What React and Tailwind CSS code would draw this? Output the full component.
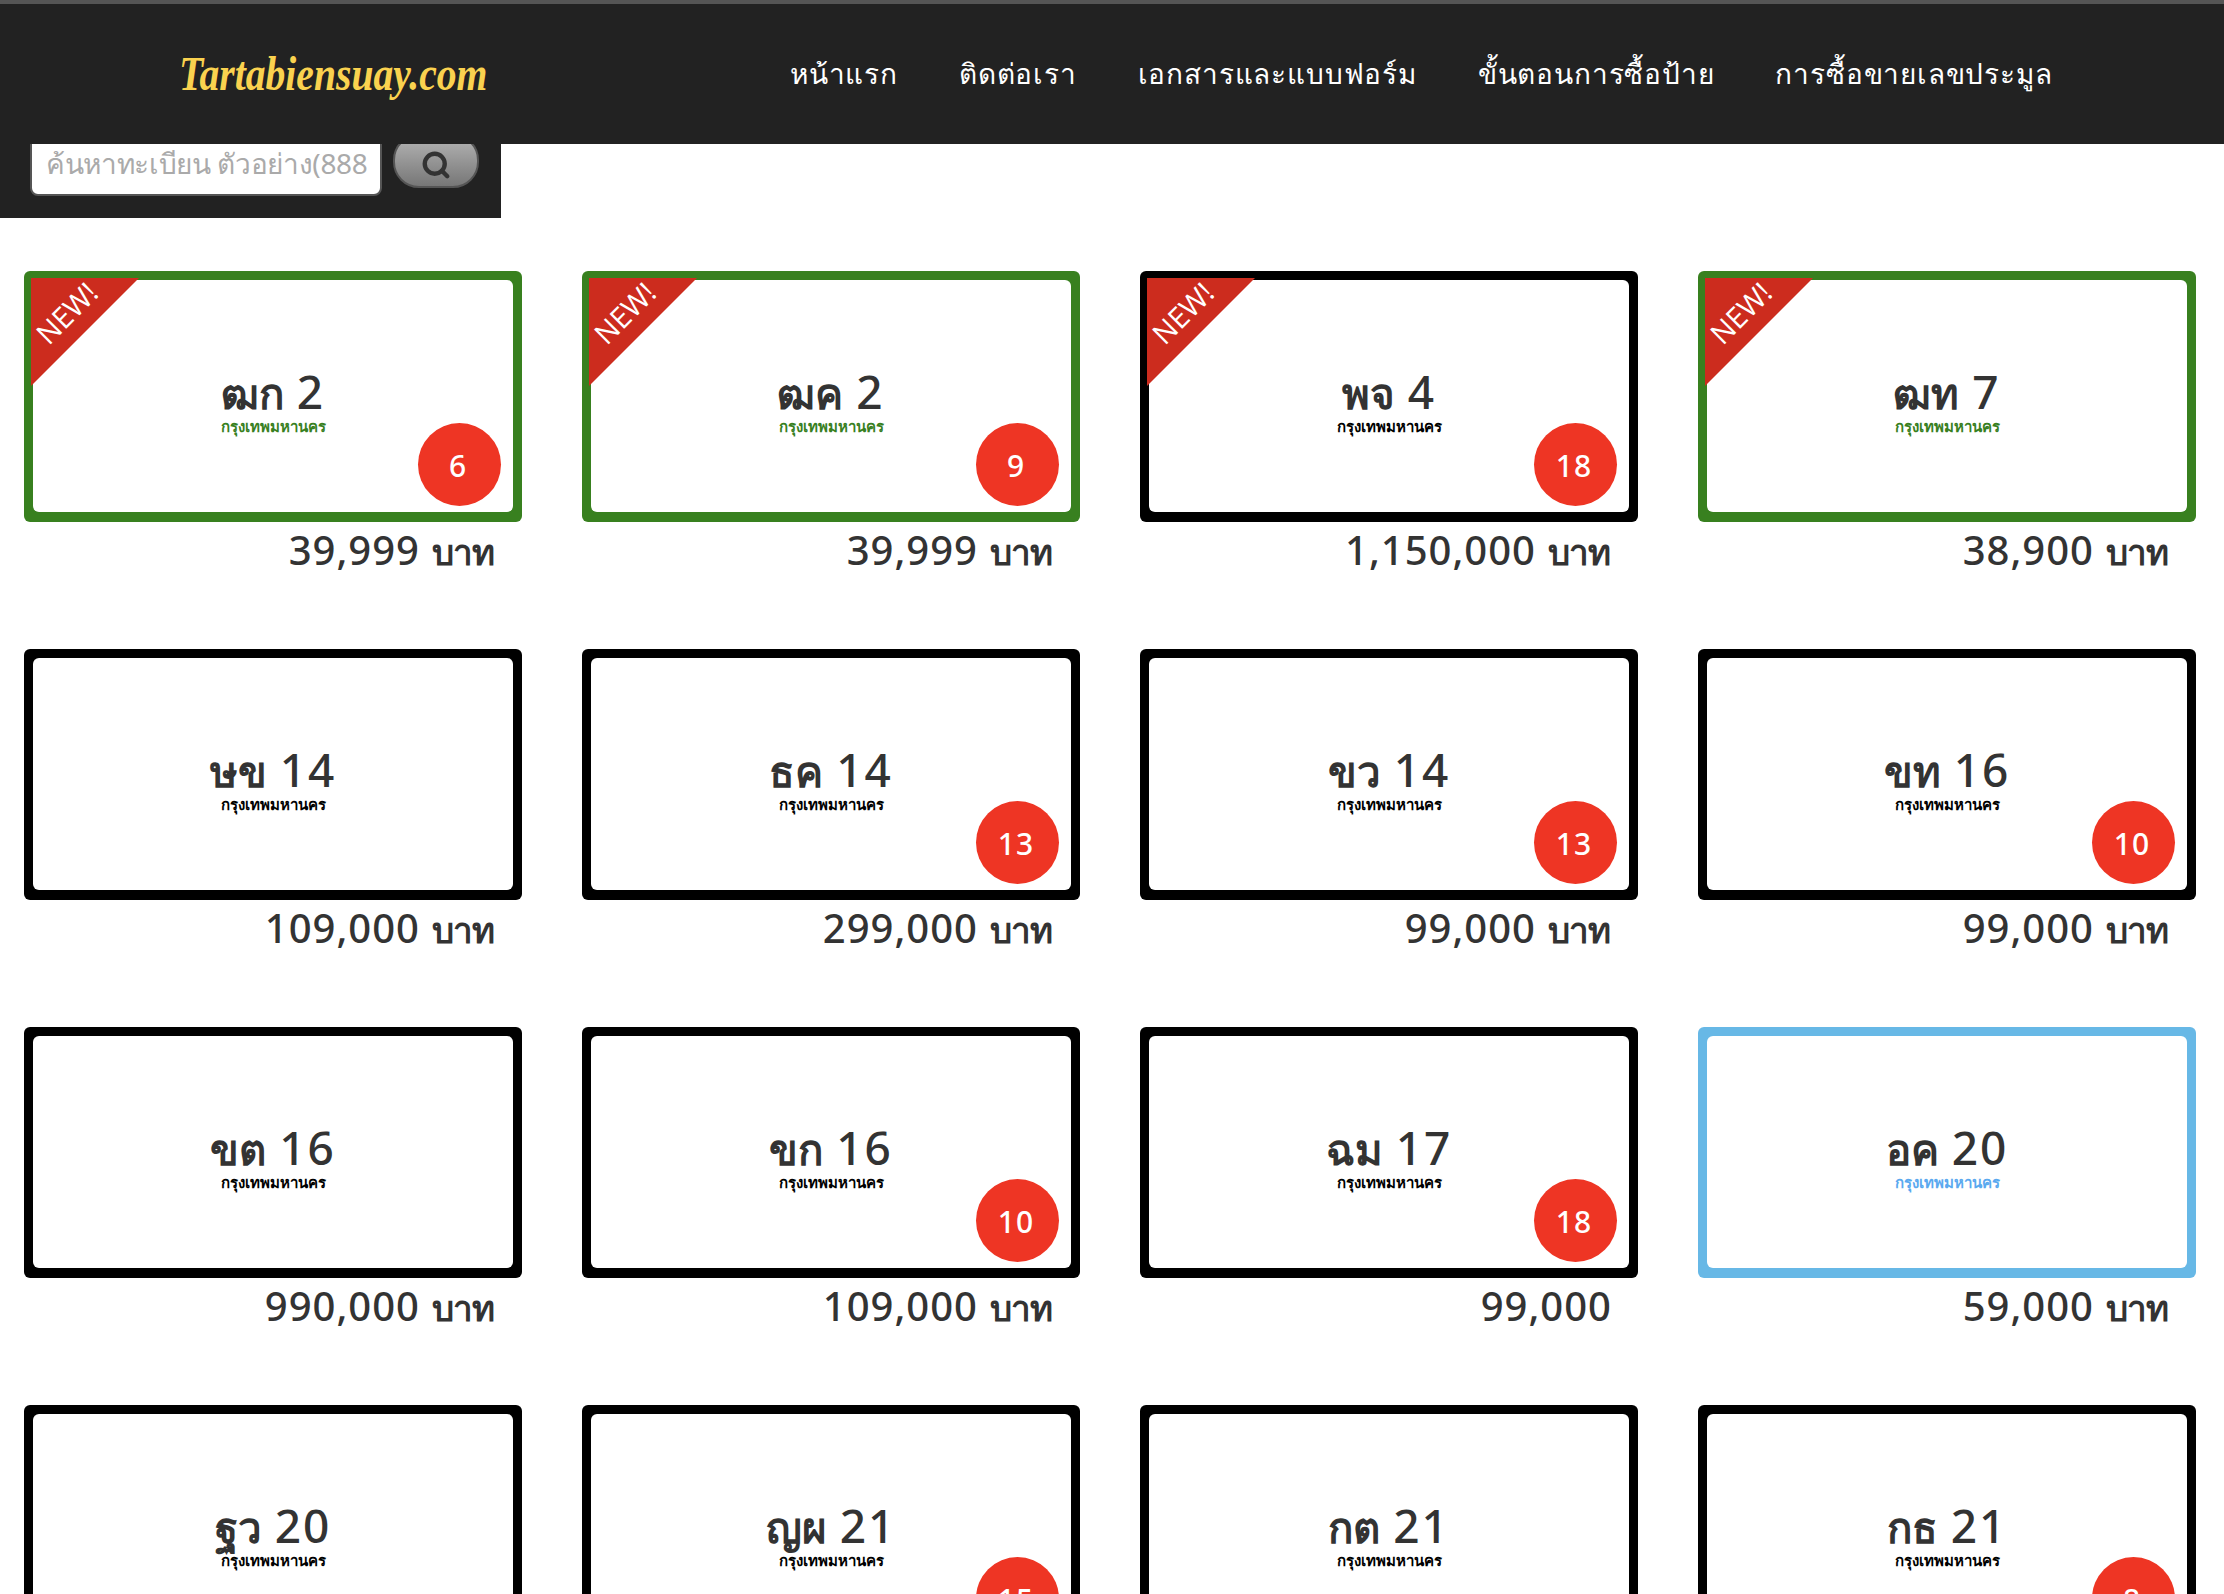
import React from "react";
import { Search } from "lucide-react";

const green = { b: "bg-[#38801f]", t: "text-[#38801f]" };
const black = { b: "bg-black", t: "text-black" };
const blue = { b: "bg-[#67b8e6]", t: "text-[#5aa9ef]" };

const plates = [
  { p: "ฒก", d: "2", c: green, n: 6, price: "39,999", isNew: true },
  { p: "ฒค", d: "2", c: green, n: 9, price: "39,999", isNew: true },
  { p: "พจ", d: "4", c: black, n: 18, price: "1,150,000", isNew: true },
  { p: "ฒท", d: "7", c: green, price: "38,900", isNew: true },
  { p: "ษข", d: "14", c: black, price: "109,000" },
  { p: "ธค", d: "14", c: black, n: 13, price: "299,000" },
  { p: "ขว", d: "14", c: black, n: 13, price: "99,000" },
  { p: "ขท", d: "16", c: black, n: 10, price: "99,000" },
  { p: "ขต", d: "16", c: black, price: "990,000" },
  { p: "ขก", d: "16", c: black, n: 10, price: "109,000" },
  { p: "ฉม", d: "17", c: black, n: 18, price: "99,000", noUnit: true },
  { p: "อค", d: "20", c: blue, price: "59,000" },
  { p: "ฐว", d: "20", c: black, price: "" },
  { p: "ญผ", d: "21", c: black, n: 15, price: "" },
  { p: "กต", d: "21", c: black, price: "" },
  { p: "กธ", d: "21", c: black, n: 8, price: "" },
];

const font = { fontFamily: '"Noto Sans", "Open Sans", sans-serif' };

function Card({ item }) {
  return (
    <div className="h-[378px] w-[498px]">
      <div className={`h-[251px] rounded-[6px] pt-[9px] pr-[9px] pb-[10px] pl-[9px] ${item.c.b}`}>
        <div className="relative flex h-full flex-col items-center rounded-[6px] bg-white pt-[87px]">
          {item.isNew && (
            <div className="absolute -left-[2px] -top-[2px] h-[108px] w-[108px]">
              <div className="h-full w-full bg-[#cc2c1e] [clip-path:polygon(0_0,100%_0,0_100%)]" />
              <span className="absolute left-[-1px] top-[20px] -rotate-45 text-[29px] leading-none text-white font-['Open_Sans']">NEW!</span>
            </div>
          )}
          <div className="flex items-baseline gap-[13px] leading-[48px] text-[#333]">
            <span className="text-[42px] font-bold">{item.p}</span>
            <span className="text-[46px] font-medium tracking-[2px]">{item.d}</span>
          </div>
          <div className={`text-[15px] leading-[18px] font-bold ${item.c.t}`}>กรุงเทพมหานคร</div>
          {item.n && (
            <div className="absolute right-[12px] bottom-[6px] flex h-[83px] w-[83px] items-center justify-center rounded-full bg-[#ee3524] pr-[3px] pt-[1px] text-[30px] font-medium tracking-[1px] text-white">
              {item.n}
            </div>
          )}
        </div>
      </div>
      {item.price && (
        <div className={`flex items-baseline justify-end gap-[12px] pt-[1px] leading-[54px] text-[#333] ${item.noUnit ? "pr-[26px]" : "pr-[28px]"}`}>
          <span className="text-[40px] font-medium tracking-[1px]">{item.price}</span>
          {!item.noUnit && <span className="text-[35px] font-bold tracking-[-1px]">บาท</span>}
        </div>
      )}
    </div>
  );
}

export default function App() {
  const nav = ["หน้าแรก", "ติดต่อเรา", "เอกสารและแบบฟอร์ม", "ขั้นตอนการซื้อป้าย", "การซื้อขายเลขประมูล"];
  return (
    <div className="h-[1594px] overflow-hidden bg-white" style={font}>
      <header className="relative z-10 flex h-[144px] items-center border-t-[4px] border-[#555] bg-[#222]">
        <div className="w-[790px] shrink-0 pl-[179px]">
          <div className="origin-left scale-x-[0.825] text-[48px] leading-none font-bold whitespace-nowrap text-[#fad24f] italic font-['Liberation_Serif']">Tartabiensuay.com</div>
        </div>
        <nav className="-mt-[2px] flex gap-[61px] text-[28px] leading-none tracking-[0.82px] text-white">
          {nav.map((t) => <a key={t} className="whitespace-nowrap">{t}</a>)}
        </nav>
      </header>
      <div className="flex h-[74px] w-[501px] gap-[11px] bg-[#222] pl-[30px]">
        <div className="-mt-[10px] flex h-[62px] w-[352px] items-end overflow-hidden rounded-[8px] border-[2px] border-[#555] bg-white pb-[11px] pl-[14px] text-[28px] leading-[40px] tracking-[-0.35px] whitespace-nowrap text-[#aaa]">ค้นหาทะเบียน ตัวอย่าง(888</div>
        <div className="-mt-[10px] flex h-[54px] w-[86px] items-center justify-center rounded-[26px] border-[2px] border-[#555] bg-gradient-to-b from-[#b5b5b5] to-[#777]">
          <Search size={30} strokeWidth={3.5} className="mt-[8px] text-[#333]" />
        </div>
      </div>
      <main className="grid grid-cols-[repeat(4,498px)] gap-x-[60px] pl-[24px] pt-[53px]">
        {plates.map((item, i) => <Card key={i} item={item} />)}
      </main>
    </div>
  );
}
